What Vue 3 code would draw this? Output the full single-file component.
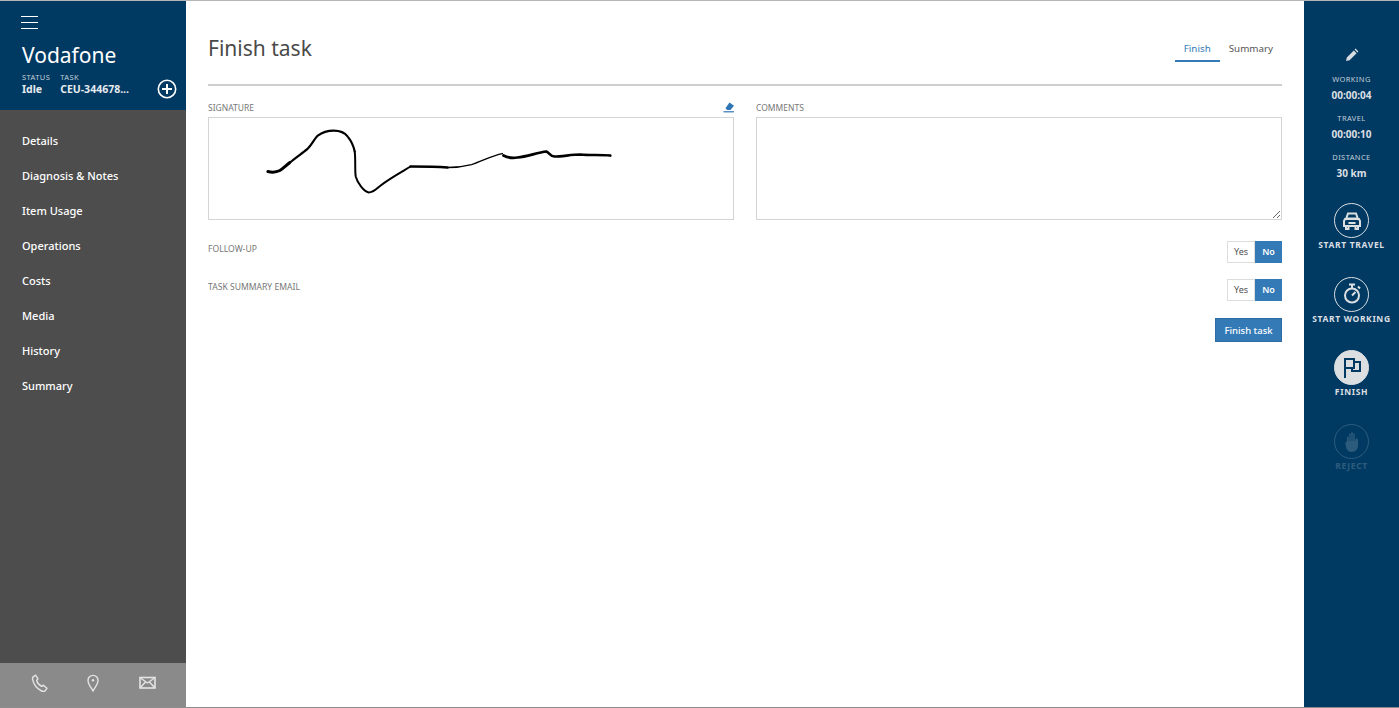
<script setup>
const navItems = ['Details', 'Diagnosis & Notes', 'Item Usage', 'Operations', 'Costs', 'Media', 'History', 'Summary']
const stats = [
  { label: 'WORKING', value: '00:00:04' },
  { label: 'TRAVEL', value: '00:00:10' },
  { label: 'DISTANCE', value: '30 km' },
]
</script>

<template>
  <div class="page">
    <aside class="sidebar">
      <header class="side-head">
        <div class="burger"><span></span><span></span><span></span></div>
        <div class="company">Vodafone</div>
        <div class="meta">
          <div class="meta-col">
            <div class="meta-label">STATUS</div>
            <div class="meta-value">Idle</div>
          </div>
          <div class="meta-col">
            <div class="meta-label">TASK</div>
            <div class="meta-value">CEU-344678...</div>
          </div>
          <svg class="plus" width="20" height="20" viewBox="0 0 20 20" fill="none" stroke="#fff">
            <circle cx="10" cy="10" r="8.7" stroke-width="1.6" />
            <path d="M10 5v10M5 10h10" stroke-width="2" />
          </svg>
        </div>
      </header>
      <nav class="nav">
        <div v-for="item in navItems" :key="item" class="nav-item">{{ item }}</div>
      </nav>
      <footer class="side-foot">
        <svg width="18" height="18" viewBox="0 0 18 18" fill="none" stroke="#e4e4e4" stroke-width="1.4" stroke-linejoin="round">
          <path d="M2.2 2.800 4.600 1.200 7 4.800 5.600 6.400c.6 2.400 2.600 4.800 5 6l1.800-1.200 3.600 3-1.800 2.600c-.8.8-2.400.8-3.600.2C6.400 14.800 2.600 10.400 1.600 5.400c-.2-1 0-2 .6-2.600z" />
        </svg>
        <svg class="pin" width="14" height="18" viewBox="0 0 14 18" fill="none" stroke="#e4e4e4" stroke-width="1.4">
          <path d="M7 16.800C5 13.400 2 10 2 6.400a5 5 0 0 1 10 0C12 10 9 13.400 7 16.800z" />
          <circle cx="7" cy="6.300" r="1.200" fill="#e4e4e4" stroke="none" />
        </svg>
        <svg width="17" height="14" viewBox="0 0 17 14" fill="none" stroke="#e4e4e4" stroke-width="1.400">
          <rect x="1" y="1.500" width="15" height="10.500" fill="none" stroke-width="1.600" />
          <path d="M1.500 2l7 5 7-5M1.500 11.500l5-5.500M15.500 11.500l-5-5.500" />
        </svg>
      </footer>
    </aside>

    <main class="content">
      <div class="title-row">
        <h1 class="title">Finish task</h1>
        <div class="tabs">
          <div class="tab active">Finish</div>
          <div class="tab">Summary</div>
        </div>
      </div>

      <div class="fields">
        <section class="field">
          <div class="field-label">
            <span>SIGNATURE</span>
            <svg class="eraser" width="12" height="11" viewBox="0 0 12 11">
              <path d="M6.500.500 11 3.800 7.400 7.900H4.300L2.400 6.300z" fill="#2f75b5" />
              <path d="M.500 9.800h10.500" stroke="#2f75b5" stroke-width="1.200" />
            </svg>
          </div>
          <div class="box">
            <svg class="signature" viewBox="208 118 525 100" fill="none" stroke="#000" stroke-linecap="round" stroke-linejoin="round">
              <path stroke-width="3" d="M267 171c4 1 8 1 12-1 3-2 6-5 10-8" />
              <path stroke-width="2.200" d="M289 162c6-5 12-9 18-14 4-4 6-9 10-13 4-3 10-5 16-5 6 0 11 2 14 6 4 5 6 10 7 15" />
              <path stroke-width="2" d="M354 151c1 8 0 18 1 25 2 7 8 15 13 16 5 0 8-4 12-7 9-7 20-13 30-19" />
              <path stroke-width="2.700" d="M410 166c12 0 24 0 37 1" />
              <path stroke-width="1.300" d="M447 167c8 0 16-1 24-3 10-3 20-9 31-11" />
              <path stroke-width="2.700" d="M503 155c4 2 9 3 14 2 10-1 20-5 29-6 3 1 4 5 8 5 8 0 17-2 26-2 10 1 20 0 30 1" />
            </svg>
          </div>
        </section>
        <section class="field">
          <div class="field-label"><span>COMMENTS</span></div>
          <textarea class="box comments"></textarea>
        </section>
      </div>

      <div class="toggle-row row-one">
        <span class="field-label-text">FOLLOW-UP</span>
        <div class="toggle"><span class="opt">Yes</span><span class="opt on">No</span></div>
      </div>
      <div class="toggle-row row-two">
        <span class="field-label-text">TASK SUMMARY EMAIL</span>
        <div class="toggle"><span class="opt">Yes</span><span class="opt on">No</span></div>
      </div>
      <div class="actions">
        <button class="finish-btn">Finish task</button>
      </div>
    </main>

    <aside class="rail">
      <svg class="pencil" width="14" height="14" viewBox="0 0 14 14" fill="#d5dbe0">
        <path d="M1 13l.800-3.600 7-7 2.800 2.800-7 7zM9.600 1.600l1-1 2.800 2.800-1 1z" />
      </svg>
      <div v-for="s in stats" :key="s.label" class="stat">
        <div class="stat-label">{{ s.label }}</div>
        <div class="stat-value">{{ s.value }}</div>
      </div>

      <div class="action first">
        <div class="circle">
          <svg width="20" height="18" viewBox="0 0 20 18" fill="none" stroke="#dcdfe2" stroke-width="2">
            <path d="M6 1.500h8l1.800 5H4.200z" />
            <path d="M3 7h14l1 2v5H2V9z" />
            <path d="M4 14.500V17h2.500v-2.500M13.500 14.500V17H16v-2.500" />
            <path d="M6.500 11h7" />
          </svg>
        </div>
        <div class="action-label">START TRAVEL</div>
      </div>
      <div class="action">
        <div class="circle">
          <svg width="20" height="22" viewBox="0 0 20 22" fill="none" stroke="#dcdfe2" stroke-width="2">
            <circle cx="10" cy="12.500" r="7" />
            <path d="M7 1.500h6M10 1.500v4M10 12.500l3.500-3.500M16 3.500l2 2" />
          </svg>
        </div>
        <div class="action-label">START WORKING</div>
      </div>
      <div class="action">
        <div class="circle solid">
          <svg width="20" height="22" viewBox="0 0 20 22" fill="none" stroke="#003a63" stroke-width="2">
            <path d="M3 21V2h9v9H3" />
            <path d="M12 5h6v9h-8v-3" />
          </svg>
        </div>
        <div class="action-label">FINISH</div>
      </div>
      <div class="action disabled">
        <div class="circle">
          <svg width="16" height="22" viewBox="0 0 16 22" fill="#dcdfe2">
            <path d="M3 7c0-2 2-2 2 0V4c0-2 2-2 2 0V2.800c0-2 2-2 2 0V4c0-2 2-2 2 0v5c0-2 3-2 3 0v6c0 3-3 6-6 6s-6-2-6-6c-1-2-1-4 1-5z" />
            <path d="M5 4v6M7 3v7M9 3v7M11 4v6" stroke="#003a63" stroke-width=".6" fill="none" />
          </svg>
        </div>
        <div class="action-label">REJECT</div>
      </div>
    </aside>
  </div>
</template>

<style scoped>
.page {
  box-sizing: border-box;
  display: flex;
  height: 708px;
  border-top: 1px solid #b5b5b5;
  border-bottom: 1px solid #8c8c8c;
  font-family: "Noto Sans", "Open Sans", sans-serif;
  color: #444;
  background: #fff;
  overflow: hidden;
}

/* left side */
.sidebar {
  flex: 0 0 186px;
  display: flex;
  flex-direction: column;
  background: #4d4d4d;
}

.side-head {
  box-sizing: border-box;
  height: 109px;
  padding: 15px 9px 0 22px;
  background: #003a63;
  color: #fff;
}

.burger span {
  display: block;
  width: 17px;
  height: 1px;
  margin: 0 0 5px -1px;
  background: #fff;
}

.company {
  margin-top: 12px;
  font-size: 21px;
  line-height: 28px;
}

.meta {
  display: flex;
  align-items: flex-end;
  margin-top: 3px;
}

.meta-col {
  margin-right: 10px;
}

.meta-label {
  font-size: 7.500px;
  line-height: 10px;
  letter-spacing: 0.4px;
  color: #c3ced8;
}

.meta-value {
  font-size: 10.500px;
  font-weight: 700;
  line-height: 15px;
  color: #e6ebef;
}

.plus {
  margin-left: auto;
  margin-bottom: -2px;
}

.nav {
  flex: 1;
  padding-top: 13px;
}

.nav-item {
  height: 35px;
  padding-left: 22px;
  font-size: 11px;
  font-weight: 500;
  line-height: 35px;
  color: #fff;
}

.side-foot {
  box-sizing: border-box;
  height: 44px;
  display: flex;
  align-items: center;
  justify-content: space-between;
  padding: 0 30px 5px 31px;
  background: #8a8a8a;
}

.pin {
  margin-right: 2px;
}

/* middle */
.content {
  flex: 1;
  min-width: 0;
  padding: 0 22px;
}

.title-row {
  display: flex;
  justify-content: space-between;
  height: 83px;
  border-bottom: 2px solid #cfcfcf;
}

.title {
  margin: 32px 0 0;
  font-size: 21px;
  font-weight: 400;
  line-height: 30px;
  color: #4a4a4a;
}

.tabs {
  display: flex;
  margin: 36px 0 0;
  height: 26px;
}

.tab {
  padding: 0 9px;
  font-size: 9.800px;
  line-height: 23px;
  color: #555;
}

.tab.active {
  color: #337ab7;
  border-bottom: 2px solid #337ab7;
  height: 23px;
}

.fields {
  display: flex;
  gap: 22px;
  margin-top: 13px;
}

.field {
  flex: 1;
  min-width: 0;
}

.field-label {
  display: flex;
  justify-content: space-between;
  align-items: center;
  height: 16px;
  margin-bottom: 2px;
  font-size: 8.500px;
  color: #777;
}

.eraser {
  margin-right: -1px;
}

.field-label-text {
  padding-top: 1px;
  font-size: 8.600px;
  color: #777;
}

.box {
  display: block;
  box-sizing: border-box;
  width: 100%;
  height: 103px;
  margin: 0;
  border: 1px solid #d4d4d4;
  background: #fff;
}

.signature {
  display: block;
  width: 100%;
  height: 100%;
}

.toggle-row {
  display: flex;
  justify-content: space-between;
  align-items: flex-start;
}

.row-one {
  margin-top: 21px;
}

.row-two {
  margin-top: 16px;
}

.toggle-row .field-label-text {
  line-height: 14px;
}

.toggle {
  display: flex;
  height: 22px;
  font-size: 9px;
  line-height: 20px;
}

.opt {
  box-sizing: border-box;
  width: 28px;
  text-align: center;
  border: 1px solid #ddd;
  color: #555;
}

.opt.on {
  width: 27px;
  border-color: #337ab7;
  background: #337ab7;
  color: #fff;
  font-weight: 600;
}

.actions {
  display: flex;
  justify-content: flex-end;
  margin-top: 17px;
}

.finish-btn {
  width: 67px;
  height: 24px;
  padding: 0;
  border: 1px solid #2e6da4;
  background: #337ab7;
  color: #fff;
  font-family: inherit;
  font-size: 9.500px;
  font-weight: 500;
}

/* right side */
.rail {
  flex: 0 0 95px;
  display: flex;
  flex-direction: column;
  align-items: center;
  padding-top: 47px;
  background: #003a63;
  color: #dcdfe2;
}

.pencil {
  display: block;
  margin-bottom: 11px;
}

.stat {
  height: 39px;
  text-align: center;
}

.stat-label {
  font-size: 7.500px;
  line-height: 12px;
  letter-spacing: 0.4px;
  color: #c3ced8;
}

.stat-value {
  margin-top: 3px;
  font-size: 10px;
  font-weight: 700;
  line-height: 14px;
}

.action {
  display: flex;
  flex-direction: column;
  align-items: center;
  height: 73.700px;
}

.action.first {
  margin-top: 13px;
}

.circle {
  box-sizing: border-box;
  display: flex;
  align-items: center;
  justify-content: center;
  width: 35px;
  height: 35px;
  border: 1.500px solid #dcdfe2;
  border-radius: 50%;
}

.circle.solid {
  background: #dcdfe2;
}

.action-label {
  font-size: 8.500px;
  font-weight: 700;
  line-height: 14px;
  letter-spacing: 0.65px;
  white-space: nowrap;
}

.action.disabled {
  opacity: 0.2;
}
</style>

<style>
html, body {
  margin: 0;
  background: #fff;
}
</style>
